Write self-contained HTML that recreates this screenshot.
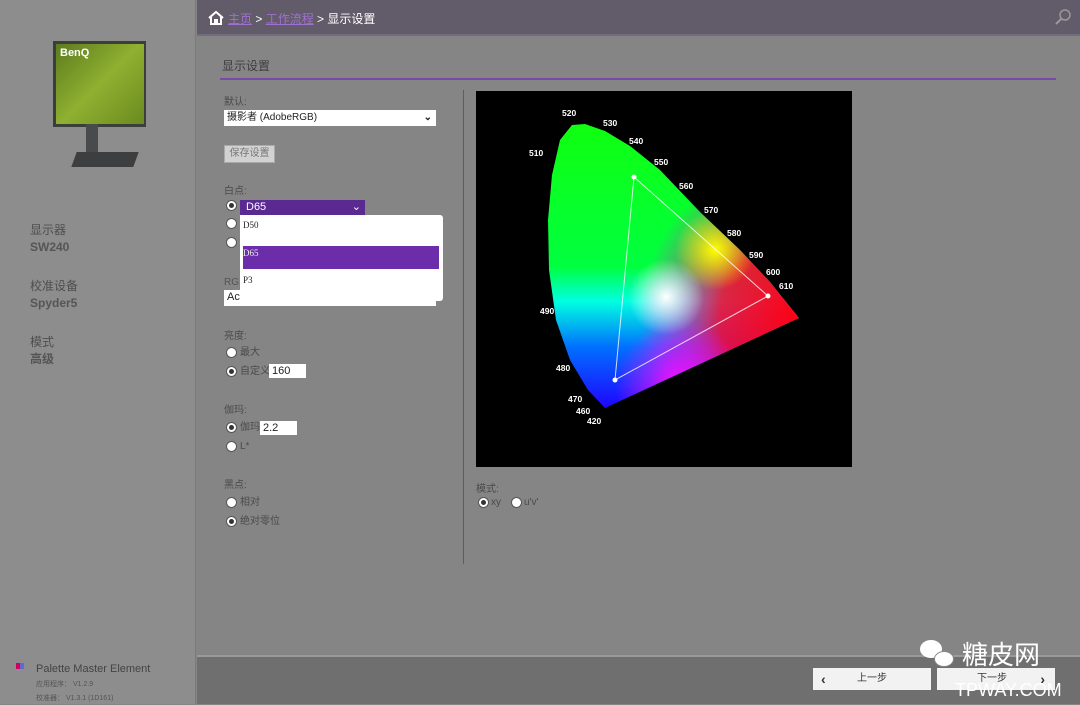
<!DOCTYPE html>
<html><head><meta charset="utf-8"><style>
*{margin:0;padding:0;box-sizing:border-box}
body{width:1080px;height:704px;overflow:hidden;background:#858585;font-family:"Liberation Sans","Noto Sans CJK SC",sans-serif;position:relative}
.abs{position:absolute}
.side{left:0;top:0;width:196px;height:704px;background:#8d8d8d;border-right:1px solid #7a7a7a}
.hdr{left:197px;top:0;width:883px;height:36px;background:#625b6a;border-bottom:2px solid #736c7a}
.t{position:absolute;font-size:11px;color:#4a4a4a;white-space:nowrap;line-height:12px}
.radio{position:absolute;width:11px;height:11px;border-radius:50%;background:#fff;border:1px solid #555}
.radio.on::after{content:"";position:absolute;left:2px;top:2px;width:5px;height:5px;border-radius:50%;background:#333}
.inp{position:absolute;background:#fff;font-size:11px;color:#222;padding-left:3px;line-height:14px;height:14px}
.foot{left:197px;top:655px;width:883px;height:49px;background:#6f6f6f;border-top:2px solid #9a9a9a}
.btn{position:absolute;top:668px;height:22px;background:#f2f2f2;font-size:10px;color:#333;line-height:22px}
</style></head><body>
<div class="abs side"></div>
<div class="abs" style="left:53px;top:41px;width:93px;height:86px;background:#3b3f3a;"></div>
<div class="abs" style="left:56px;top:44px;width:88px;height:80px;background:linear-gradient(135deg,#5d7b1f,#8fb030 50%,#6b8a20)"></div>
<div class="abs" style="left:60px;top:47px;font-size:11px;font-weight:bold;color:#fff">BenQ</div>
<div class="abs" style="left:86px;top:124px;width:12px;height:32px;background:#484a4c"></div>
<div class="abs" style="left:74px;top:152px;width:62px;height:15px;background:#3c3e40;transform:skewX(-20deg)"></div>
<div class="t" style="left:30px;top:224px;font-size:12px;color:#4e4e4e">显示器</div>
<div class="t" style="left:30px;top:241px;font-size:12px;font-weight:bold;color:#555">SW240</div>
<div class="t" style="left:30px;top:280px;font-size:12px;color:#4e4e4e">校准设备</div>
<div class="t" style="left:30px;top:297px;font-size:12px;font-weight:bold;color:#555">Spyder5</div>
<div class="t" style="left:30px;top:336px;font-size:12px;color:#4e4e4e">模式</div>
<div class="t" style="left:30px;top:353px;font-size:12px;font-weight:bold;color:#555">高级</div>
<div class="abs" style="left:16px;top:663px;width:4px;height:6px;background:#c06"></div>
<div class="abs" style="left:20px;top:663px;width:4px;height:6px;background:#66c"></div>
<div class="t" style="left:36px;top:663px;font-size:11px;color:#444">Palette Master Element</div>
<div class="t" style="left:36px;top:679px;font-size:7px;color:#555">应用程序： V1.2.9</div>
<div class="t" style="left:36px;top:693px;font-size:7px;color:#555">校准器： V1.3.1 (1D161)</div>

<div class="abs hdr"></div>
<svg class="abs" style="left:208px;top:10px" width="16" height="16" viewBox="0 0 16 16"><path d="M1 8L8 2L15 8M3 7V14H7V10H9V14H13V7" fill="none" stroke="#fff" stroke-width="2"/></svg>
<div class="t" style="left:228px;top:13px;font-size:12px;color:#fff"><span style="color:#a070d0;text-decoration:underline">主页</span> &gt; <span style="color:#a070d0;text-decoration:underline">工作流程</span> &gt; 显示设置</div>
<svg class="abs" style="left:1054px;top:8px" width="18" height="18"><circle cx="11" cy="7" r="5" fill="none" stroke="#999" stroke-width="1.5"/><line x1="7" y1="11" x2="2" y2="16" stroke="#999" stroke-width="2"/></svg>

<div class="t" style="left:222px;top:60px;font-size:12px;color:#3e3e3e">显示设置</div>
<div class="abs" style="left:220px;top:78px;width:836px;height:2px;background:#7a4aa8"></div>
<div class="abs" style="left:463px;top:90px;width:1px;height:474px;background:#5e5e5e"></div>

<div class="t" style="left:224px;top:97px;font-size:10px">默认:</div>
<div class="inp" style="left:224px;top:110px;width:212px;height:16px;line-height:16px;font-size:10px">摄影者 (AdobeRGB)<span style="position:absolute;right:4px;font-weight:bold">⌄</span></div>
<div class="abs" style="left:224px;top:145px;width:51px;height:18px;background:#d2d2d2;border:1px solid #aaa;font-size:10px;color:#777;line-height:16px;text-align:center">保存设置</div>

<div class="t" style="left:224px;top:186px;font-size:10px">白点:</div>
<div class="radio on" style="left:226px;top:200px"></div>
<div class="radio" style="left:226px;top:218px"></div>
<div class="radio" style="left:226px;top:237px"></div>
<div class="abs" style="left:240px;top:200px;width:125px;height:15px;background:#5a2a90;color:#fff;font-size:11px;line-height:15px;padding-left:6px">D65<span style="position:absolute;right:4px">⌄</span></div>
<div class="t" style="left:224px;top:277px;font-size:10px;color:#555">RG</div>
<div class="inp" style="left:224px;top:290px;width:212px;height:16px">Ac</div>
<div class="abs" style="left:240px;top:215px;width:203px;height:86px;background:#fff;border-radius:0 3px 3px 3px"></div>
<div class="t" style="left:243px;top:219px;font-size:9px;color:#222;font-family:'Liberation Serif',serif">D50</div>
<div class="abs" style="left:243px;top:246px;width:196px;height:23px;background:#6b2daa"></div>
<div class="t" style="left:243px;top:247px;font-size:9px;color:#eee;font-family:'Liberation Serif',serif">D65</div>
<div class="t" style="left:243px;top:274px;font-size:9px;color:#222;font-family:'Liberation Serif',serif">P3</div>

<div class="t" style="left:224px;top:331px;font-size:10px">亮度:</div>
<div class="radio" style="left:226px;top:347px"></div><div class="t" style="left:240px;top:347px;font-size:10px">最大</div>
<div class="radio on" style="left:226px;top:366px"></div><div class="t" style="left:240px;top:366px;font-size:10px">自定义</div>
<div class="inp" style="left:269px;top:364px;width:37px">160</div>
<div class="t" style="left:224px;top:405px;font-size:10px">伽玛:</div>
<div class="radio on" style="left:226px;top:422px"></div><div class="t" style="left:240px;top:422px;font-size:10px">伽玛</div>
<div class="inp" style="left:260px;top:421px;width:37px">2.2</div>
<div class="radio" style="left:226px;top:441px"></div><div class="t" style="left:240px;top:441px;font-size:10px">L*</div>
<div class="t" style="left:224px;top:480px;font-size:10px">黑点:</div>
<div class="radio" style="left:226px;top:497px"></div><div class="t" style="left:240px;top:497px;font-size:10px">相对</div>
<div class="radio on" style="left:226px;top:516px"></div><div class="t" style="left:240px;top:516px;font-size:10px">绝对零位</div>

<svg class="abs" style="left:476px;top:91px" width="376" height="376" viewBox="476 91 376 376">
<defs>
<clipPath id="hs"><path d="M605 408 L588 390 L570 360 L556 320 L549 270 L548 220 L552 175 L560 140 L572 125 L585 124 L605 131 L630 146 L660 170 L700 212 L740 250 L770 282 L799 318 Z"/></clipPath>
<linearGradient id="g1" x1="570" y1="124" x2="570" y2="410" gradientUnits="userSpaceOnUse"><stop offset="0" stop-color="#10ff10"/><stop offset="0.5" stop-color="#00ff40"/><stop offset="0.62" stop-color="#00ffe0"/><stop offset="0.78" stop-color="#0070ff"/><stop offset="1" stop-color="#2000ff"/></linearGradient>
<radialGradient id="red" cx="800" cy="318" r="160" gradientUnits="userSpaceOnUse"><stop offset="0" stop-color="#ff0010"/><stop offset="0.5" stop-color="#ff0030" stop-opacity="0.85"/><stop offset="1" stop-color="#ff00ff" stop-opacity="0"/></radialGradient>
<radialGradient id="mag" cx="680" cy="385" r="65" gradientUnits="userSpaceOnUse"><stop offset="0" stop-color="#ff10ff"/><stop offset="1" stop-color="#ff10ff" stop-opacity="0"/></radialGradient>
<radialGradient id="yel" cx="715" cy="250" r="40" gradientUnits="userSpaceOnUse"><stop offset="0" stop-color="#ffff00"/><stop offset="1" stop-color="#ffff00" stop-opacity="0"/></radialGradient>
<radialGradient id="wh" cx="666" cy="297" r="38" gradientUnits="userSpaceOnUse"><stop offset="0" stop-color="#fff"/><stop offset="0.25" stop-color="#fff" stop-opacity="0.75"/><stop offset="1" stop-color="#fff" stop-opacity="0"/></radialGradient>
</defs>
<rect x="476" y="91" width="376" height="376" fill="#000"/>
<g clip-path="url(#hs)">
<rect x="540" y="110" width="270" height="310" fill="url(#g1)"/>
<rect x="540" y="110" width="270" height="310" fill="url(#red)"/>
<rect x="540" y="110" width="270" height="310" fill="url(#mag)"/>
<rect x="540" y="110" width="270" height="310" fill="url(#yel)"/>
<rect x="540" y="110" width="270" height="310" fill="url(#wh)"/>
</g>
<path d="M634 177 L768 296 L615 380 Z" fill="none" stroke="#fff" stroke-width="1" opacity="0.8"/>
<circle cx="634" cy="177" r="2.5" fill="#fff"/><circle cx="768" cy="296" r="2.5" fill="#fff"/><circle cx="615" cy="380" r="2.5" fill="#fff"/>
<g font-family="Liberation Sans" font-size="8.5" font-weight="bold" fill="#fff">
<text x="562" y="116">520</text><text x="603" y="126">530</text><text x="629" y="144">540</text><text x="654" y="165">550</text><text x="679" y="189">560</text><text x="704" y="213">570</text><text x="727" y="236">580</text><text x="749" y="258">590</text><text x="766" y="275">600</text><text x="779" y="289">610</text>
<text x="529" y="156">510</text><text x="540" y="314">490</text><text x="556" y="371">480</text><text x="568" y="402">470</text><text x="576" y="414">460</text><text x="587" y="424">420</text>
</g>
</svg>

<div class="t" style="left:476px;top:484px;font-size:10px">模式:</div>
<div class="radio on" style="left:478px;top:497px"></div><div class="t" style="left:491px;top:497px;font-size:10px">xy</div>
<div class="radio" style="left:511px;top:497px"></div><div class="t" style="left:524px;top:497px;font-size:10px">u'v'</div>

<div class="abs foot"></div>
<div class="btn" style="left:813px;width:118px"><span style="position:absolute;left:8px;font-size:14px;font-weight:bold">‹</span><span style="position:absolute;left:44px">上一步</span></div>
<div class="btn" style="left:937px;width:118px"><span style="position:absolute;left:40px">下一步</span><span style="position:absolute;right:10px;font-size:14px;font-weight:bold">›</span></div>
<div class="abs" style="left:920px;top:640px;width:22px;height:18px;border-radius:50%;background:#fff"></div>
<div class="abs" style="left:934px;top:651px;width:20px;height:16px;border-radius:50%;background:#fff;border:1px solid #888"></div>
<div class="t" style="left:962px;top:640px;font-size:26px;line-height:30px;color:#fff">糖皮网</div>
<div class="t" style="left:955px;top:680px;font-size:18px;line-height:20px;color:#fff">TPWAY.COM</div>
</body></html>
